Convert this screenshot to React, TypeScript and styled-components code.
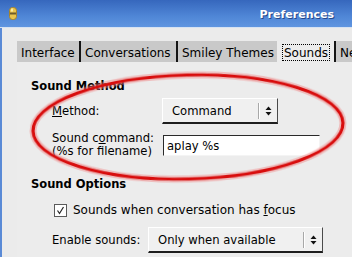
import styled, { createGlobalStyle } from "styled-components";

const GlobalStyle = createGlobalStyle`
  html, body {
    margin: 0;
    padding: 0;
    background: #ebebeb;
  }
  body {
    overflow: hidden;
  }
`;

const Window = styled.div`
  position: relative;
  width: 352px;
  height: 257px;
  overflow: hidden;
  display: flex;
  flex-direction: column;
  background: #ebebeb;
  font-family: "DejaVu Sans", "Liberation Sans", sans-serif;
  font-size: 11.6px;
  color: #000;
`;

const TitleBar = styled.div`
  flex: none;
  height: 27px;
  display: flex;
  align-items: center;
  justify-content: space-between;
  padding: 0 18px 0 9px;
  background: linear-gradient(#3667bd, #4f86d6 60%, #5f95e0);
  border-bottom: 1px solid #d6e2f2;
`;

const Title = styled.span`
  font-weight: bold;
  font-size: 11px;
  color: #fff;
  text-shadow: 1px 1px 0 #27488a;
  padding-top: 1px;
`;

const Body = styled.div`
  flex: 1;
  display: flex;
  flex-direction: column;
  border-left: 2px solid #5a8ad6;
  padding: 13px 0 0 15px;
`;

const Tabs = styled.div`
  flex: none;
  display: flex;
  height: 21px;
  font-size: 12px;
`;

const Tab = styled.div<{ $selected?: boolean; $width?: number }>`
  box-sizing: border-box;
  flex: none;
  display: flex;
  align-items: center;
  white-space: nowrap;
  overflow: hidden;
  padding: 2px 0 0 ${(p) => (p.$selected ? 5 : 4)}px;
  ${(p) => (p.$width ? `width: ${p.$width}px;` : "")}
  background: ${(p) => (p.$selected ? "#ececec" : "#c9c9c9")};
  border-right: 2px solid #151515;
  margin-left: ${(p) => (p.$selected ? "-2px" : "0")};
`;

const Focus = styled.span`
  border: 1px dotted #000;
  padding: 1px 1px 0;
`;

const Panel = styled.div`
  flex: 1;
  background: #ececec;
  padding: 17px 0 0 14px;
`;

const Heading = styled.div<{ $gap?: number }>`
  font-weight: bold;
  font-size: 11.5px;
  line-height: 14px;
  margin-top: ${(p) => p.$gap ?? 0}px;
`;

const FormGrid = styled.div`
  display: grid;
  grid-template-columns: 110px auto;
  justify-items: start;
  align-items: center;
  row-gap: 8px;
  margin: 5px 0 0 21px;
`;

const Label = styled.div<{ $width?: number }>`
  line-height: 13px;
  white-space: nowrap;
  ${(p) => (p.$width ? `width: ${p.$width}px; flex: none;` : "")}
`;

const Key = styled.span`
  text-decoration: underline;
  text-underline-offset: 1px;
`;

const Combo = styled.div<{ $width: number }>`
  box-sizing: border-box;
  width: ${(p) => p.$width}px;
  height: 26px;
  display: flex;
  align-items: center;
  padding-left: 9px;
  background: #f0f0f0;
  border-top: 1px solid #ffffff;
  border-left: 1px solid #ffffff;
  border-right: 1px solid #4a4a4a;
  border-bottom: 2px solid #1e1e1e;
`;

const ComboText = styled.span`
  flex: 1;
  white-space: nowrap;
`;

const ComboArrows = styled.span`
  flex: none;
  width: 18px;
  height: 16px;
  display: flex;
  align-items: center;
  justify-content: center;
  border-left: 1px solid #a8a8a8;
  box-shadow: inset 1px 0 0 #ffffff;
`;

const Entry = styled.div`
  box-sizing: border-box;
  width: 157px;
  height: 21px;
  margin-left: 1px;
  display: flex;
  align-items: center;
  padding: 1px 0 0 3px;
  background: #fff;
  border-top: 1px solid #2a2a2a;
  border-left: 1px solid #2a2a2a;
  border-right: 1px solid #f4f4f4;
  border-bottom: 1px solid #f4f4f4;
`;

const CheckRow = styled.div`
  display: flex;
  align-items: center;
  gap: 6px;
  height: 14px;
  font-size: 12px;
  margin: 12px 0 0 23px;
`;

const CheckBox = styled.span`
  box-sizing: border-box;
  width: 13px;
  height: 13px;
  display: flex;
  align-items: center;
  justify-content: center;
  background: #fff;
  border: 1px solid #5a5a5a;
`;

const FieldRow = styled.div`
  display: flex;
  align-items: center;
  margin: 10px 0 0 21px;
`;

const Annotation = styled.svg`
  position: absolute;
  left: 0;
  top: 0;
  pointer-events: none;
`;

function Arrows() {
  return (
    <svg width="7" height="10" viewBox="0 0 7 10">
      <path d="M3.5 0.5 L6.5 4 L0.5 4 Z" fill="#111" />
      <path d="M0.5 6 L6.5 6 L3.5 9.5 Z" fill="#111" />
    </svg>
  );
}

function AppIcon() {
  return (
    <svg width="8" height="13" viewBox="0 0 8 13">
      <rect x="0.5" y="0.5" width="7" height="12" rx="3" fill="#e9c54e" stroke="#a5832a" />
      <rect x="1" y="5.5" width="6" height="2" fill="#6f5c2c" />
      <rect x="2" y="1.5" width="2" height="3" fill="#fbeaa6" />
    </svg>
  );
}

export default function App() {
  return (
    <>
      <GlobalStyle />
      <Window>
        <TitleBar>
          <AppIcon />
          <Title>Preferences</Title>
        </TitleBar>
        <Body>
          <Tabs>
            <Tab $width={64}>Interface</Tab>
            <Tab $width={97}>Conversations</Tab>
            <Tab $width={101}>Smiley Themes</Tab>
            <Tab $selected $width={59}>
              <Focus>Sounds</Focus>
            </Tab>
            <Tab>Network</Tab>
          </Tabs>
          <Panel>
            <Heading>Sound Method</Heading>
            <FormGrid>
              <Label>
                <Key>M</Key>ethod:
              </Label>
              <Combo $width={116}>
                <ComboText>Command</ComboText>
                <ComboArrows>
                  <Arrows />
                </ComboArrows>
              </Combo>
              <Label>
                Sound c<Key>o</Key>mmand:
                <br />
                (%s for filename)
              </Label>
              <Entry>aplay %s</Entry>
            </FormGrid>
            <Heading $gap={19}>Sound Options</Heading>
            <CheckRow>
              <CheckBox>
                <svg width="9" height="9" viewBox="0 0 9 9">
                  <path d="M1.5 4.5 L3.5 7.5 L7.5 1" fill="none" stroke="#222" strokeWidth="1.2" />
                </svg>
              </CheckBox>
              <span>
                Sounds when conversation has <Key>f</Key>ocus
              </span>
            </CheckRow>
            <FieldRow>
              <Label $width={96}>Enable sounds:</Label>
              <Combo $width={175}>
                <ComboText>Only when available</ComboText>
                <ComboArrows>
                  <Arrows />
                </ComboArrows>
              </Combo>
            </FieldRow>
          </Panel>
        </Body>
        <Annotation width="352" height="257" viewBox="0 0 352 257">
          <defs>
            <filter id="soft" x="-10%" y="-20%" width="120%" height="140%">
              <feGaussianBlur stdDeviation="0.7" />
            </filter>
          </defs>
          <g transform="rotate(-1.5 188 127)" filter="url(#soft)">
            <ellipse cx="188" cy="127" rx="155" ry="52" fill="none" stroke="#f08080" strokeOpacity="0.45" strokeWidth="7" />
            <ellipse cx="188" cy="127" rx="155" ry="52" fill="none" stroke="#d80d0d" strokeWidth="3.2" />
          </g>
        </Annotation>
      </Window>
    </>
  );
}
